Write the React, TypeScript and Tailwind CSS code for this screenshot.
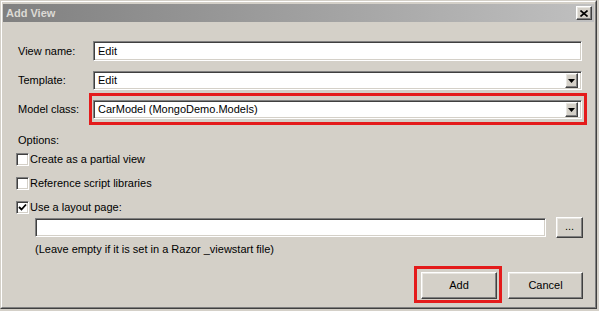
import React from 'react';

// Classic 3D edges
const raised =
  'border border-t-white border-l-white border-r-[#404040] border-b-[#404040] shadow-[inset_-1px_-1px_0_#808080,inset_1px_1px_0_#e8e6e1] bg-[#d4d0c8]';
const sunken =
  'border border-t-[#808080] border-l-[#808080] border-r-white border-b-white shadow-[inset_1px_1px_0_#404040,inset_-1px_-1px_0_#d4d0c8] bg-white';

const TextBox = ({ value, className }: { value?: string; className?: string }) => (
  <div className={`${sunken} flex items-center pl-[4px] ${className ?? ''}`}>{value}</div>
);

const Select = ({ value }: { value: string }) => (
  <div className={`${sunken} flex items-center h-[19px] w-[489px] pl-[4px] pr-[3px]`}>
    <span className="flex-1">{value}</span>
    <div className={`${raised} w-[13px] h-[15px] flex items-center justify-center`}>
      <svg width="7" height="4" viewBox="0 0 7 4">
        <path d="M0 0H7L3.5 4Z" fill="#000" />
      </svg>
    </div>
  </div>
);

const Checkbox = ({ label, checked }: { label: string; checked?: boolean }) => (
  <div className="flex items-center gap-[1px] h-[13px] ml-[1px]">
    <div className={`${sunken} w-[13px] h-[13px] flex items-center justify-center`}>
      {checked && (
        <svg width="9" height="9" viewBox="0 0 9 9">
          <path d="M1 4L3.5 6.5L8 1.5" stroke="#000" strokeWidth="1.8" fill="none" />
        </svg>
      )}
    </div>
    <span>{label}</span>
  </div>
);

const Row = ({ label, children, className }: { label: string; children: React.ReactNode; className?: string }) => (
  <div className={`flex items-center ${className ?? ''}`}>
    <span className="w-[78px] pl-[3px]">{label}</span>
    {children}
  </div>
);

export default function App() {
  return (
    <div className="w-[599px] h-[311px] bg-[#d4d0c8] text-[11px] leading-[13px] text-black font-['Liberation_Sans',Arial,sans-serif]">
      <div className="w-[597px] h-[309px] border border-t-[#d4d0c8] border-l-[#d4d0c8] border-r-[#404040] border-b-[#404040]">
        <div className="h-full border border-t-white border-l-white border-r-[#808080] border-b-[#808080] pt-[2px] px-[1px] flex flex-col">
          {/* title bar */}
          <div className="h-[18px] bg-linear-to-r from-[#808080] to-[#c0c0c0] flex items-center pl-[3px] pr-[2px]">
            <span className="flex-1 font-bold text-[#dcdad5]">Add View</span>
            <div className={`${raised} w-[16px] h-[14px] flex items-center justify-center`}>
              <svg width="8" height="7" viewBox="0 0 8 7">
                <path d="M0.5 0.5L7.5 6.5M7.5 0.5L0.5 6.5" stroke="#000" strokeWidth="1.6" />
              </svg>
            </div>
          </div>

          <div className="flex flex-col pl-[12px]">
            <Row label="View name:" className="mt-[19px]">
              <TextBox value="Edit" className="h-[20px] w-[489px]" />
            </Row>
            <Row label="Template:" className="mt-[10px]">
              <Select value="Edit" />
            </Row>
            <Row label="Model class:" className="mt-[10px]">
              <div className="relative">
                <Select value="CarModel (MongoDemo.Models)" />
                <div className="absolute -left-[4px] -right-[5px] -top-[7px] -bottom-[6px] border-[3px] border-[#e41b1b]" />
              </div>
            </Row>

            <span className="mt-[15px] pl-[3px]">Options:</span>
            <div className="flex flex-col gap-[11px] mt-[6px]">
              <Checkbox label="Create as a partial view" />
              <Checkbox label="Reference script libraries" />
              <Checkbox label="Use a layout page:" checked />
            </div>

            <div className="flex items-center ml-[20px] mt-[3px] h-[21px]">
              <TextBox className="h-[19px] w-[511px]" />
              <div className={`${raised} ml-[10px] w-[27px] h-[21px] flex items-center justify-center pb-[3px]`}>...</div>
            </div>
            <span className="ml-[20px] mt-[5px]">(Leave empty if it is set in a Razor _viewstart file)</span>

            <div className="flex mt-[16px] ml-[406px] gap-[11px]">
              <div className="relative">
                <div className={`${raised} w-[76px] h-[27px] flex items-center justify-center`}>Add</div>
                <div className="absolute -left-[7px] -right-[5px] -top-[6px] -bottom-[4px] border-[3px] border-[#e41b1b]" />
              </div>
              <div className={`${raised} w-[75px] h-[27px] flex items-center justify-center`}>Cancel</div>
            </div>
          </div>
        </div>
      </div>
    </div>
  );
}
